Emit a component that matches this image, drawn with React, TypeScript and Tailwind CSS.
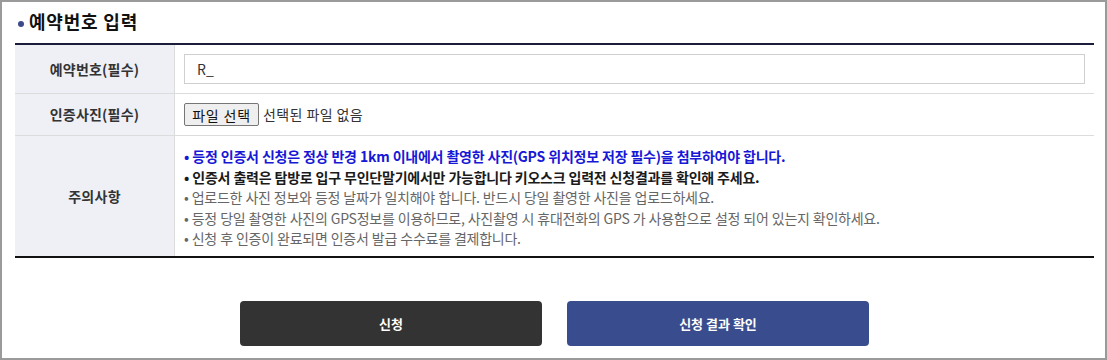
import React from "react";

const font = { fontFamily: '"Noto Sans CJK KR", "Noto Sans", sans-serif' };

export default function App() {
  return (
    <div
      className="w-[1107px] h-[360px] border-2 border-[#9a9a9a] bg-white pl-[13px] pr-[11px] flex flex-col"
      style={font}
    >
      <div className="h-[41px] flex items-center gap-[5px] pl-[3px]">
        <span className="w-[6px] h-[6px] rounded-full bg-[#3d4b8c] mt-[2px]" />
        <h2 className="text-[18px] font-bold text-[#111] tracking-[0.8px] -mt-[2px]">예약번호 입력</h2>
      </div>
      <div className="border-t-2 border-b-2 border-t-[#1c1d3a] border-b-[#111]">
        <div className="flex h-[49px] border-b border-[#dcdcdc]">
          <div className="w-[160px] bg-[#eef0f6] border-r border-[#dcdcdc] flex items-center justify-center text-[14px] font-bold text-[#333] tracking-[0.2px]">
            예약번호(필수)
          </div>
          <div className="flex-1 flex items-center pl-[9px] pr-[9px]">
            <div className="w-full h-[30px] border border-[#cfcfcf] flex items-center pl-[12px] text-[14px] text-[#333]">
              R_
            </div>
          </div>
        </div>
        <div className="flex h-[42px] border-b border-[#dcdcdc]">
          <div className="w-[160px] bg-[#eef0f6] border-r border-[#dcdcdc] flex items-center justify-center text-[14px] font-bold text-[#333] tracking-[0.2px]">
            인증사진(필수)
          </div>
          <div className="flex-1 flex items-center pl-[9px] gap-[4px]">
            <button className="h-[23px] w-[75px] bg-[#efefef] border border-[#767676] rounded-[2px] text-[14px] text-[#111] leading-none tracking-[0.8px]">
              파일 선택
            </button>
            <span className="text-[14px] text-[#333] tracking-[0.4px]">선택된 파일 없음</span>
          </div>
        </div>
        <div className="flex h-[120px]">
          <div className="w-[160px] bg-[#eef0f6] border-r border-[#dcdcdc] flex items-center justify-center text-[14px] font-bold text-[#333] tracking-[0.3px]">
            주의사항
          </div>
          <div className="flex-1 pl-[9px] pt-[10px] text-[14px] leading-[20.5px] tracking-[-0.25px] [word-spacing:0.3px]">
            <p className="font-bold text-[#1717d6]">• 등정 인증서 신청은 정상 반경 1km 이내에서 촬영한 사진(GPS 위치정보 저장 필수)을 첨부하여야 합니다.</p>
            <p className="font-bold text-[#1a1a1a]">• 인증서 출력은 탐방로 입구 무인단말기에서만 가능합니다 키오스크 입력전 신청결과를 확인해 주세요.</p>
            <p className="text-[#666]">• 업로드한 사진 정보와 등정 날짜가 일치해야 합니다. 반드시 당일 촬영한 사진을 업로드하세요.</p>
            <p className="text-[#666]">• 등정 당일 촬영한 사진의 GPS정보를 이용하므로, 사진촬영 시 휴대전화의 GPS 가 사용함으로 설정 되어 있는지 확인하세요.</p>
            <p className="text-[#666]">• 신청 후 인증이 완료되면 인증서 발급 수수료를 결제합니다.</p>
          </div>
        </div>
      </div>
      <div className="flex justify-center gap-[25px] mt-[43px]">
        <button className="w-[302px] h-[45px] rounded-[4px] bg-[#333333] text-white text-[13px] font-bold">신청</button>
        <button className="w-[302px] h-[45px] rounded-[4px] bg-[#394d8e] text-white text-[13px] font-bold">신청 결과 확인</button>
      </div>
    </div>
  );
}
